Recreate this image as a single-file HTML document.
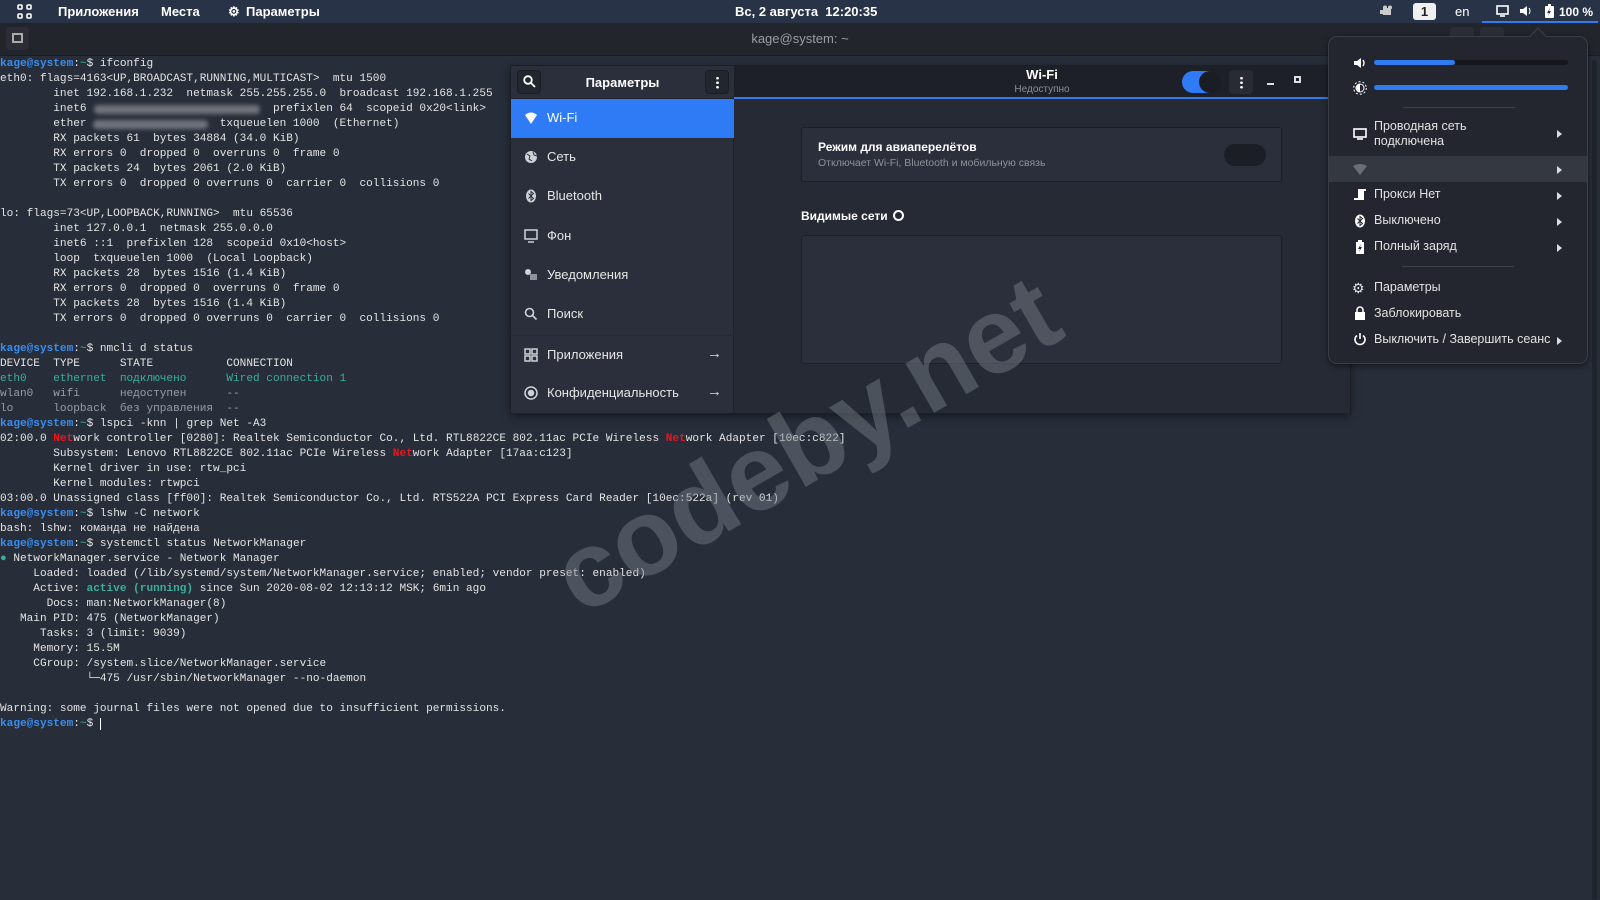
<!DOCTYPE html>
<html><head><meta charset="utf-8">
<style>
*{margin:0;padding:0;box-sizing:border-box}
body{width:1600px;height:900px;overflow:hidden;background:#272d39;font-family:"Liberation Sans","Noto Sans CJK SC",sans-serif;position:relative;color:#eee}
.abs{position:absolute}
#top{left:0;top:0;width:1600px;height:23px;background:#283347;font-size:13px;color:#fff;font-weight:bold}
#top span{position:absolute;top:4px}
#tt{left:0;top:23px;width:1600px;height:33px;background:#22252c;border-bottom:1px solid #1a1c21}
#term{left:0;top:57px;font-family:"Liberation Mono",monospace;font-size:11.1px;line-height:15px;white-space:pre;color:#e4e4e4}
.p{color:#3a8ef0;font-weight:bold}.t{color:#3ab09a}.g{color:#9a9da3}.r{color:#e8151d;font-weight:bold}
.blur{position:absolute;height:9px;background:#6f737b;filter:blur(2px);border-radius:4px}
#win{left:511px;top:66px;width:839px;height:347px;background:#252a35;box-shadow:0 0 0 1px #1c1f26,0 3px 8px rgba(0,0,0,.5)}
#side{left:0;top:0;width:223px;height:347px;background:#2a2f3b;border-right:1px solid #1f222a}
#sh{left:0;top:0;width:223px;height:33px;background:#2a2f3b;border-bottom:1px solid #1f222a}
#mh{left:223px;top:0;width:616px;height:33px;background:#1d2029;border-bottom:2px solid #2f7bf0}
.btn{position:absolute;width:24px;height:24px;background:#22262f;border-radius:4px;border:1px solid #1a1d24}
.it{position:absolute;left:0;width:223px;height:39px;font-size:13px;color:#e6e6e6}
.it span.tx{position:absolute;left:25px;top:11px}
.it .ic{position:absolute;left:3px;top:12px;width:14px;height:14px;color:#cfd2d8}
.arr{position:absolute;right:12px;top:9px;font-size:15px;color:#ddd}
#menu{left:1328px;top:36px;width:260px;height:328px;background:#23262e;border:1px solid #3a3e47;border-radius:9px;box-shadow:0 2px 6px rgba(0,0,0,.5)}
.mi{position:absolute;left:45px;font-size:12.5px;color:#e2e2e2}
.ma{position:absolute;left:228px;width:0;height:0;border-left:5px solid #ddd;border-top:4px solid transparent;border-bottom:4px solid transparent}
.mic{position:absolute;left:24px;width:14px;height:14px}
</style></head><body>

<div id="top" class="abs">
<svg class="abs" style="left:17px;top:4px" width="15" height="15" viewBox="0 0 15 15" fill="none" stroke="#fff" stroke-width="1.6"><rect x="1" y="1" width="4" height="4" rx="1"/><rect x="10" y="1" width="4" height="4" rx="1"/><rect x="1" y="10" width="4" height="4" rx="1"/><rect x="10" y="10" width="4" height="4" rx="1"/></svg>
<span style="left:58px">Приложения</span>
<span style="left:161px">Места</span>
<span style="left:228px">⚙</span>
<span style="left:246px">Параметры</span>
<span style="left:735px">Вс, 2 августа&nbsp; 12:20:35</span>
<svg class="abs" style="left:1380px;top:5px" width="14" height="12" viewBox="0 0 14 12" fill="#ccc"><rect x="3" y="3" width="8" height="7"/><circle cx="5" cy="2.5" r="2"/><circle cx="10" cy="2.5" r="2"/><path d="M0 5h3v4H0z"/></svg>
<div class="abs" style="left:1413px;top:3px;width:23px;height:17px;background:#f0f0f0;border-radius:3px;color:#222;text-align:center;font-size:13px;line-height:17px">1</div>
<span style="left:1455px;font-weight:normal">en</span>
<svg class="abs" style="left:1496px;top:5px" width="13" height="12" viewBox="0 0 13 12" fill="none" stroke="#fff" stroke-width="1.6"><rect x="1" y="1" width="11" height="8"/><path d="M4 11h5"/></svg>
<svg class="abs" style="left:1519px;top:5px" width="13" height="12" viewBox="0 0 13 12"><path d="M1 4h3l4-3v10L4 8H1z" fill="#fff"/><path d="M10 3q2 3 0 6" stroke="#fff" fill="none"/></svg>
<svg class="abs" style="left:1545px;top:4px" width="9" height="14" viewBox="0 0 9 14"><rect x="0" y="2" width="9" height="12" rx="1" fill="#fff"/><rect x="3" y="0" width="3" height="2" fill="#fff"/><path d="M5 4L2 9h2l-1 3 3-5H4z" fill="#283347"/></svg>
<span style="left:1559px;font-size:12px;top:5px">100 %</span>
<div class="abs" style="left:1482px;top:21px;width:116px;height:2px;background:#2f7bf0"></div>
</div>

<div id="tt" class="abs">
<div class="abs" style="left:6px;top:4px;width:23px;height:23px;background:#2b2e36;border-radius:4px"></div>
<div class="abs" style="left:12px;top:10px;width:11px;height:10px;border:2px solid #aaa"></div>
<div class="abs" style="left:0;top:8px;width:1600px;text-align:center;font-size:13px;color:#9b9ea4">kage@system: ~</div>
<div class="abs" style="left:1450px;top:4px;width:24px;height:23px;background:#2b2e36;border-radius:4px"></div>
<div class="abs" style="left:1480px;top:4px;width:24px;height:23px;background:#2b2e36;border-radius:4px"></div>
</div>

<div id="term" class="abs"><span class="p">kage@system</span>:<span class="t">~</span>$ ifconfig
eth0: flags=4163&lt;UP,BROADCAST,RUNNING,MULTICAST&gt;  mtu 1500
        inet 192.168.1.232  netmask 255.255.255.0  broadcast 192.168.1.255
        inet6                            prefixlen 64  scopeid 0x20&lt;link&gt;
        ether                    txqueuelen 1000  (Ethernet)
        RX packets 61  bytes 34884 (34.0 KiB)
        RX errors 0  dropped 0  overruns 0  frame 0
        TX packets 24  bytes 2061 (2.0 KiB)
        TX errors 0  dropped 0 overruns 0  carrier 0  collisions 0

lo: flags=73&lt;UP,LOOPBACK,RUNNING&gt;  mtu 65536
        inet 127.0.0.1  netmask 255.0.0.0
        inet6 ::1  prefixlen 128  scopeid 0x10&lt;host&gt;
        loop  txqueuelen 1000  (Local Loopback)
        RX packets 28  bytes 1516 (1.4 KiB)
        RX errors 0  dropped 0  overruns 0  frame 0
        TX packets 28  bytes 1516 (1.4 KiB)
        TX errors 0  dropped 0 overruns 0  carrier 0  collisions 0

<span class="p">kage@system</span>:<span class="t">~</span>$ nmcli d status
DEVICE  TYPE      STATE           CONNECTION
<span class="t">eth0    ethernet  подключено      Wired connection 1</span>
<span class="g">wlan0   wifi      недоступен      --</span>
<span class="g">lo      loopback  без управления  --</span>
<span class="p">kage@system</span>:<span class="t">~</span>$ lspci -knn | grep Net -A3
02:00.0 <span class="r">Net</span>work controller [0280]: Realtek Semiconductor Co., Ltd. RTL8822CE 802.11ac PCIe Wireless <span class="r">Net</span>work Adapter [10ec:c822]
        Subsystem: Lenovo RTL8822CE 802.11ac PCIe Wireless <span class="r">Net</span>work Adapter [17aa:c123]
        Kernel driver in use: rtw_pci
        Kernel modules: rtwpci
03:00.0 Unassigned class [ff00]: Realtek Semiconductor Co., Ltd. RTS522A PCI Express Card Reader [10ec:522a] (rev 01)
<span class="p">kage@system</span>:<span class="t">~</span>$ lshw -C network
bash: lshw: команда не найдена
<span class="p">kage@system</span>:<span class="t">~</span>$ systemctl status NetworkManager
<span class="t">●</span> NetworkManager.service - Network Manager
     Loaded: loaded (/lib/systemd/system/NetworkManager.service; enabled; vendor preset: enabled)
     Active: <span class="t" style="font-weight:bold">active (running)</span> since Sun 2020-08-02 12:13:12 MSK; 6min ago
       Docs: man:NetworkManager(8)
   Main PID: 475 (NetworkManager)
      Tasks: 3 (limit: 9039)
     Memory: 15.5M
     CGroup: /system.slice/NetworkManager.service
             └─475 /usr/sbin/NetworkManager --no-daemon

Warning: some journal files were not opened due to insufficient permissions.
<span class="p">kage@system</span>:<span class="t">~</span>$ <span style="border-left:1px solid #fff"> </span></div>
<div class="blur" style="left:94px;top:105px;width:166px"></div>
<div class="blur" style="left:93px;top:120px;width:115px"></div>

<div id="win" class="abs">
 <div id="side" class="abs">
  <div id="sh" class="abs">
   <div class="btn" style="left:6px;top:4px"></div>
   <svg class="abs" style="left:12px;top:9px" width="13" height="13" viewBox="0 0 13 13" fill="none" stroke="#fff" stroke-width="1.8"><circle cx="5" cy="5" r="3.8"/><path d="M8 8l4 4"/></svg>
   <div class="abs" style="left:0;top:9px;width:223px;text-align:center;font-size:13px;font-weight:bold;color:#fff">Параметры</div>
   <div class="btn" style="left:194px;top:4px"></div>
   <div class="abs" style="left:205px;top:10px;width:3px;height:13px;background:radial-gradient(circle,#fff 1.2px,transparent 1.5px) 0 0/3px 4.5px"></div>
  </div>
  <div class="it" style="top:33px;background:#2f7bf5;color:#fff"><svg class="ic" style="left:13px" viewBox="0 0 14 14"><path d="M1 4q6-5 12 0L7 13z" fill="#fff"/></svg><span class="tx" style="left:36px">Wi-Fi</span></div>
  <div class="it" style="top:72px"><svg class="ic" style="left:13px" viewBox="0 0 14 14"><circle cx="7" cy="7" r="6" fill="#cfd2d8"/><path d="M3 4l3 2-1 3 3 2M9 2l1 3 3 1" stroke="#2a2f3b" fill="none"/></svg><span class="tx" style="left:36px">Сеть</span></div>
  <div class="it" style="top:111px"><svg class="ic" style="left:13px" viewBox="0 0 14 14"><ellipse cx="7" cy="7" rx="5" ry="6.5" fill="#cfd2d8"/><path d="M4.5 4.5l5 5-2.5 2V2.5l2.5 2-5 5" stroke="#2a2f3b" fill="none"/></svg><span class="tx" style="left:36px">Bluetooth</span></div>
  <div class="it" style="top:151px"><svg class="ic" style="left:13px" viewBox="0 0 14 14"><rect x="1" y="1" width="12" height="9" fill="none" stroke="#cfd2d8" stroke-width="1.5"/><path d="M4 13h6" stroke="#cfd2d8" stroke-width="1.5"/></svg><span class="tx" style="left:36px">Фон</span></div>
  <div class="it" style="top:190px"><svg class="ic" style="left:13px" viewBox="0 0 14 14"><circle cx="4" cy="4" r="3" fill="#cfd2d8"/><rect x="6" y="6" width="7" height="6" fill="#8e939b"/></svg><span class="tx" style="left:36px">Уведомления</span></div>
  <div class="it" style="top:229px"><svg class="ic" style="left:13px" viewBox="0 0 14 14" fill="none" stroke="#cfd2d8" stroke-width="1.6"><circle cx="5.5" cy="5.5" r="4"/><path d="M8.5 8.5l4 4"/></svg><span class="tx" style="left:36px">Поиск</span></div>
  <div class="it" style="top:269px;border-top:1px solid #252a34"><svg class="ic" style="left:13px" viewBox="0 0 14 14" fill="none" stroke="#cfd2d8" stroke-width="1.5"><rect x="1" y="1" width="5" height="5"/><rect x="8" y="1" width="5" height="5"/><rect x="1" y="8" width="5" height="5"/><rect x="8" y="8" width="5" height="5"/></svg><span class="tx" style="left:36px">Приложения</span><span class="arr">→</span></div>
  <div class="it" style="top:308px"><svg class="ic" style="left:13px" viewBox="0 0 14 14" fill="none" stroke="#cfd2d8" stroke-width="1.5"><circle cx="7" cy="7" r="6"/><circle cx="7" cy="7" r="2.5" fill="#cfd2d8"/></svg><span class="tx" style="left:36px">Конфиденциальность</span><span class="arr">→</span></div>
 </div>
 <div id="mh" class="abs">
  <div class="abs" style="left:0;top:1px;width:616px;text-align:center;font-size:13px;font-weight:bold;color:#fff">Wi-Fi</div>
  <div class="abs" style="left:0;top:18px;width:616px;text-align:center;font-size:10px;color:#8b8f97">Недоступно</div>
  <div class="abs" style="left:448px;top:5px;width:38px;height:22px;border-radius:11px;background:#2f7bf5"></div>
  <div class="abs" style="left:465px;top:5px;width:22px;height:22px;border-radius:11px;background:#1a1d24"></div>
  <div class="abs" style="left:495px;top:4px;width:24px;height:24px;background:#282b33;border-radius:4px"></div>
  <div class="abs" style="left:506px;top:10px;width:3px;height:13px;background:radial-gradient(circle,#fff 1.2px,transparent 1.5px) 0 0/3px 4.5px"></div>
  <div class="abs" style="left:533px;top:17px;width:7px;height:2px;background:#ddd"></div>
  <div class="abs" style="left:560px;top:10px;width:7px;height:7px;border:2px solid #ddd"></div>
 </div>
 <div class="abs" style="left:290px;top:61px;width:481px;height:55px;background:#2a2f3b;border:1px solid #1c1f26;border-radius:3px">
  <div class="abs" style="left:16px;top:12px;font-size:12px;font-weight:bold;color:#fff">Режим для авиаперелётов</div>
  <div class="abs" style="left:16px;top:29px;font-size:10.5px;color:#8e939b">Отключает Wi-Fi, Bluetooth и мобильную связь</div>
  <div class="abs" style="left:422px;top:16px;width:42px;height:22px;border-radius:11px;background:#1b1e25"></div>
 </div>
 <div class="abs" style="left:290px;top:143px;font-size:12px;font-weight:bold;color:#fff">Видимые сети</div>
 <div class="abs" style="left:382px;top:144px;width:11px;height:11px;border-radius:50%;border:2px solid #fff;background:#252a35"></div>
 <div class="abs" style="left:290px;top:169px;width:481px;height:129px;background:#2a2f3b;border:1px solid #1c1f26;border-radius:3px"></div>
</div>

<div class="abs" style="left:1592px;top:60px;width:5px;height:840px;background:#1f232b;border-radius:3px"></div>

<div id="menu" class="abs">
 <div class="abs" style="left:203px;top:-7px;width:12px;height:12px;background:#23262e;border-left:1px solid #3a3e47;border-top:1px solid #3a3e47;transform:rotate(45deg)"></div>
 <svg class="mic" style="top:19px" viewBox="0 0 14 14"><path d="M1 5h3l4-3v10L4 9H1z" fill="#fff"/><path d="M10 4q2 3 0 6" stroke="#fff" fill="none" stroke-width="1.4"/></svg>
 <div class="abs" style="left:45px;top:23px;width:194px;height:5px;border-radius:3px;background:#15171c"></div>
 <div class="abs" style="left:45px;top:23px;width:81px;height:5px;border-radius:3px;background:#2f7bf0"></div>
 <svg class="mic" style="top:44px" viewBox="0 0 14 14"><circle cx="7" cy="7" r="4.5" fill="#fff"/><circle cx="7" cy="7" r="6.3" fill="none" stroke="#fff" stroke-dasharray="2 2"/><path d="M7 3.5a3.5 3.5 0 0 1 0 7z" fill="#23262e"/></svg>
 <div class="abs" style="left:45px;top:48px;width:194px;height:5px;border-radius:3px;background:#2f7bf0"></div>
 <div class="abs" style="left:74px;top:70px;width:112px;height:1px;background:#3d414a"></div>
 <svg class="mic" style="top:90px" viewBox="0 0 14 14" fill="none" stroke="#fff" stroke-width="1.6"><rect x="1" y="2" width="12" height="8"/><path d="M4 12h6"/></svg>
 <div class="mi" style="top:82px;line-height:15px">Проводная сеть<br>подключена</div><div class="ma" style="top:93px"></div>
 <div class="abs" style="left:0;top:119px;width:258px;height:26px;background:#343841"></div>
 <svg class="mic" style="top:126px" viewBox="0 0 14 14"><path d="M0 3q7-4 14 0L7 12z" fill="#6a6e76"/></svg><div class="ma" style="top:129px"></div>
 <svg class="mic" style="top:151px" viewBox="0 0 14 14" fill="#fff"><rect x="5" y="1" width="6" height="11"/><path d="M1 10h4v2H1zM10 1h3v2h-3z"/></svg>
 <div class="mi" style="top:150px">Прокси Нет</div><div class="ma" style="top:155px"></div>
 <svg class="mic" style="top:177px" viewBox="0 0 14 14"><ellipse cx="7" cy="7" rx="5" ry="6.5" fill="#fff"/><path d="M4.5 4.5l5 5-2.5 2V2.5l2.5 2-5 5" stroke="#23262e" fill="none"/></svg>
 <div class="mi" style="top:176px">Выключено</div><div class="ma" style="top:181px"></div>
 <svg class="mic" style="top:203px" viewBox="0 0 14 14"><rect x="3" y="2" width="8" height="12" fill="#fff"/><rect x="5" y="0" width="4" height="2" fill="#fff"/><path d="M8 4L5 9h2l-1 3 3-5H7z" fill="#23262e"/></svg>
 <div class="mi" style="top:202px">Полный заряд</div><div class="ma" style="top:207px"></div>
 <div class="abs" style="left:73px;top:229px;width:112px;height:1px;background:#3d414a"></div>
 <div class="mi" style="top:243px;left:23px;font-size:14px">⚙</div>
 <div class="mi" style="top:243px">Параметры</div>
 <svg class="mic" style="top:269px" viewBox="0 0 14 14"><rect x="2" y="6" width="10" height="8" fill="#fff"/><path d="M4 6V4a3 3 0 0 1 6 0v2" stroke="#fff" fill="none" stroke-width="1.6"/></svg>
 <div class="mi" style="top:269px">Заблокировать</div>
 <svg class="mic" style="top:295px" viewBox="0 0 14 14" fill="none" stroke="#fff" stroke-width="1.6"><path d="M4 3.5a5 5 0 1 0 6 0M7 1v6"/></svg>
 <div class="mi" style="top:295px">Выключить / Завершить сеанс</div><div class="ma" style="top:300px"></div>
</div>

<div class="abs" style="left:506px;top:390px;width:600px;text-align:center;font-size:108px;line-height:108px;font-weight:bold;color:rgba(125,130,140,0.45);transform:rotate(-30deg);transform-origin:50% 50%;white-space:nowrap">codeby.net</div>
</body></html>
